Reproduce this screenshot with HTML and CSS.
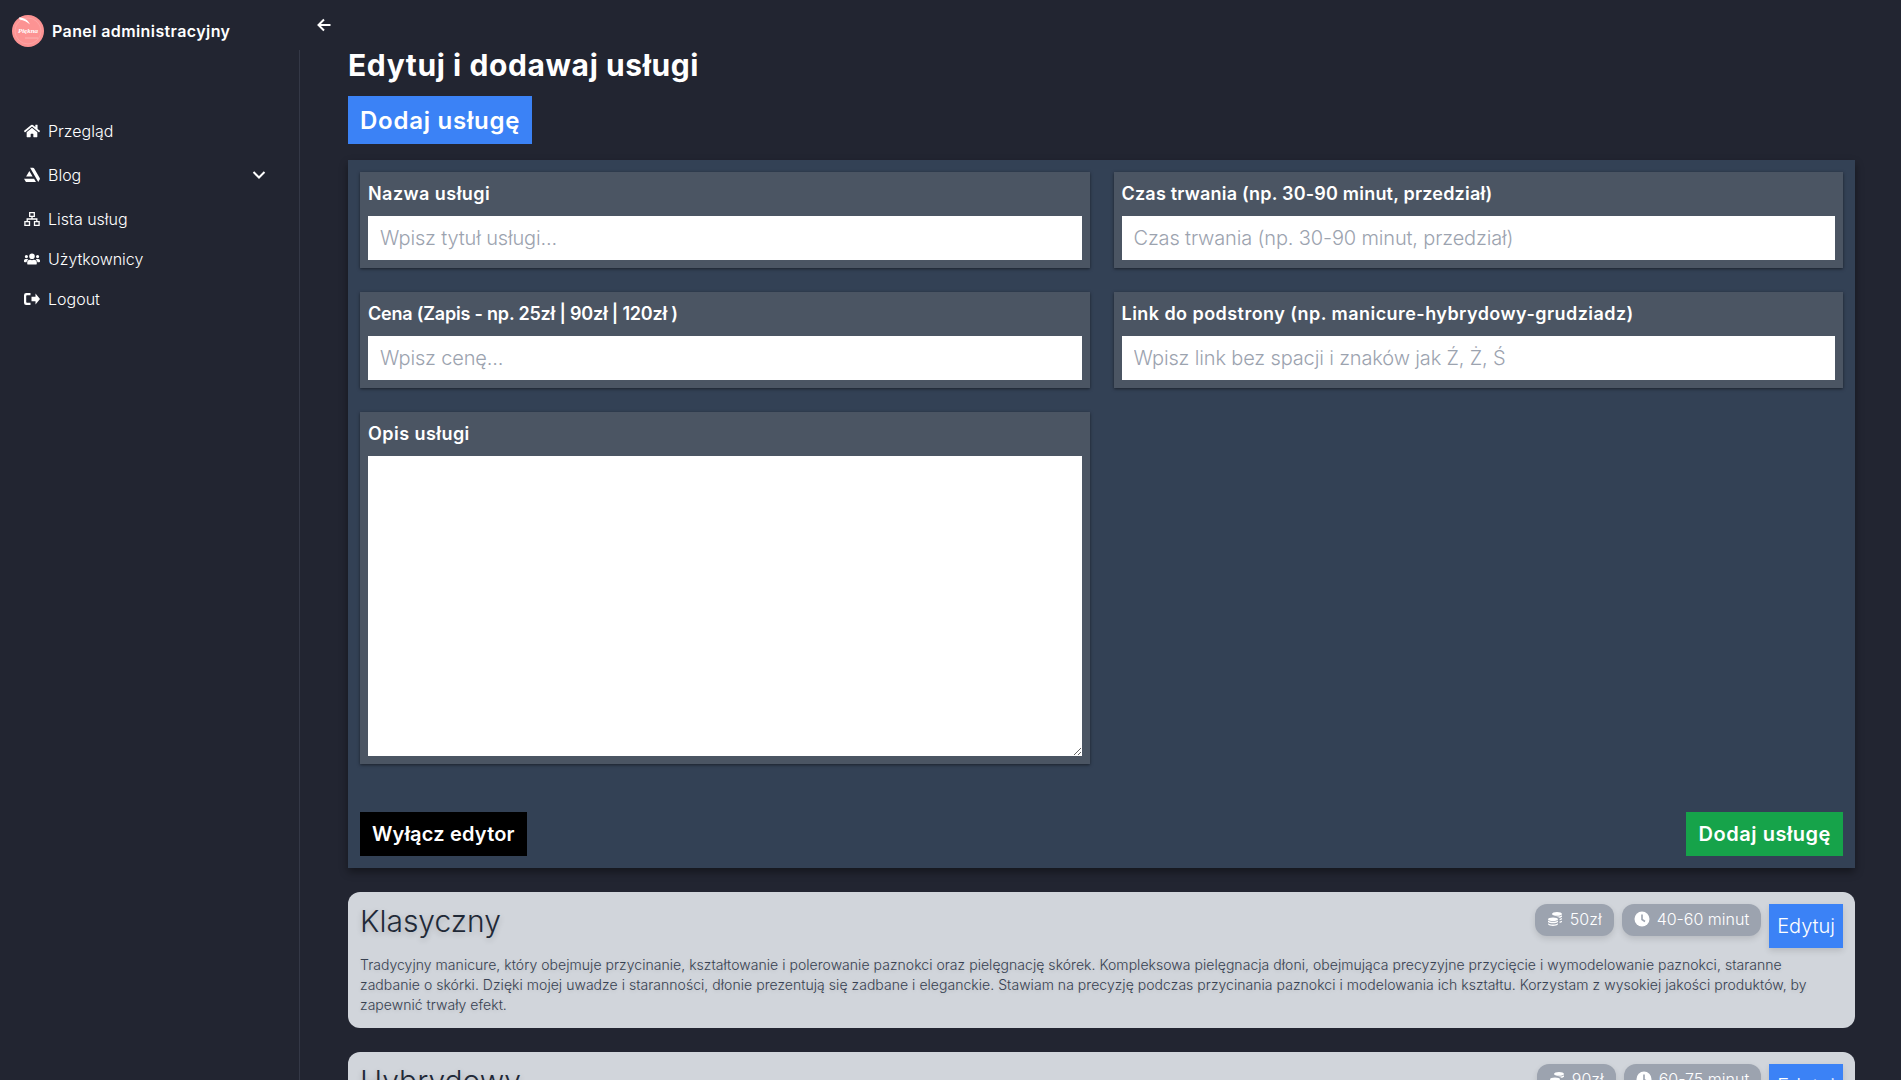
FILE: index.html
```html
<!DOCTYPE html>
<html lang="pl">
<head>
    <title>Panel administracyjny</title>
    <meta charset="UTF-8">
    <link rel="stylesheet" href="styles.css">
</head>
<body>
    <aside class="sidebar">
        <div class="brand">
            <div class="brand-name">
                <svg class="logo" viewBox="0 0 32 32">
                    <circle cx="16" cy="16" r="16" fill="#fc9393"/>
                    <circle cx="16" cy="16" r="13" fill="none" stroke="#fdb4b4" stroke-width=".5"/>
                    <path d="M7 2.500C12 2.500 15.500 4.500 18 9.500C15 6.800 12 5.500 7.500 4.500Z" fill="#fff"/>
                    <text class="logo-text" x="16" y="18" text-anchor="middle">Piękna</text>
                    <path d="M13 23H26" stroke="#fdc4c4" stroke-width=".7"/>
                </svg>
                <span>Panel administracyjny</span>
            </div>
            <button class="collapse">
                <svg viewBox="0 0 16 16" width="16" height="16"><path d="M14.500 8H2.500M8 2.500L2.500 8L8 13.500" fill="none" stroke="#fff" stroke-width="2"/></svg>
            </button>
        </div>
        <nav class="menu">
            <a class="menu-item tall" href="#">
                <svg class="menu-icon" viewBox="0 0 576 512"><path fill="#fff" d="M280 148L96 300v164a16 16 0 0 0 16 16l112-1a16 16 0 0 0 16-16v-96a16 16 0 0 1 16-16h64a16 16 0 0 1 16 16v96a16 16 0 0 0 16 16l112 1a16 16 0 0 0 16-16V300L296 148a12 12 0 0 0-16 0zM572 251l-84-69V44a12 12 0 0 0-12-12h-56a12 12 0 0 0-12 12v72l-89-74a48 48 0 0 0-61 0L4 251a12 12 0 0 0-2 17l26 31a12 12 0 0 0 17 2L280 107a12 12 0 0 1 16 0l235 194a12 12 0 0 0 17-2l26-31a12 12 0 0 0-2-17z"/></svg>
                <span>Przegląd</span>
            </a>
            <a class="menu-item tall" href="#">
                <svg class="menu-icon" viewBox="0 0 512 512"><path fill="#fff" d="M2 378l44 76c9 17 27 28 46 28h291l-60-104H2zM510 379c0-10-3-20-8-29L331 53c-9-17-27-28-46-28h-90l261 453 41-71c8-13 13-18 13-28zM275 306L171 126 67 306h208z"/></svg>
                <span>Blog</span>
                <svg class="chevron" viewBox="0 0 16 16" width="16" height="16"><path d="M2.500 5L8 10.500L13.500 5" fill="none" stroke="#fff" stroke-width="2"/></svg>
            </a>
            <a class="menu-item" href="#">
                <svg class="menu-icon" viewBox="0 0 16 16"><path fill="none" stroke="#fff" stroke-width="1.300" d="M5.700 1.700h4.600v3.600H5.700zM.9 10.700h4.600v3.600H.9zM10.500 10.700h4.600v3.600h-4.600zM8 5.300V8M3.200 10.700V8h9.600v2.700"/></svg>
                <span>Lista usług</span>
            </a>
            <a class="menu-item" href="#">
                <svg class="menu-icon" viewBox="0 0 640 512"><path fill="#fff" d="M96 224a64 64 0 1 0 0-128 64 64 0 0 0 0 128zm448 0a64 64 0 1 0 0-128 64 64 0 0 0 0 128zm32 32h-64a64 64 0 0 0-45 19 146 146 0 0 1 75 109h66a32 32 0 0 0 32-32v-32a64 64 0 0 0-64-64zm-256 0a112 112 0 1 0 0-224 112 112 0 0 0 0 224zm77 32h-8a157 157 0 0 1-138 0h-8A115 115 0 0 0 128 403v29a48 48 0 0 0 48 48h288a48 48 0 0 0 48-48v-29a115 115 0 0 0-115-115zm-224-13a64 64 0 0 0-45-19H64a64 64 0 0 0-64 64v32a32 32 0 0 0 32 32h66a147 147 0 0 1 75-109z"/></svg>
                <span>Użytkownicy</span>
            </a>
            <a class="menu-item" href="#">
                <svg class="menu-icon" viewBox="0 0 16 16"><path fill="#fff" d="M7.500 5.800h4V2.400L16 8l-4.500 5.600v-3.400h-4zM2.200 2H6.500v2.200H3a.8.8 0 0 0-.8.8v6c0 .4.400.8.8.8h3.500V14H2.200A2.200 2.200 0 0 1 0 11.800V4.200A2.200 2.200 0 0 1 2.200 2z"/></svg>
                <span>Logout</span>
            </a>
        </nav>
    </aside>

    <main class="content">
        <h1>Edytuj i dodawaj usługi</h1>
        <button class="btn btn-add">Dodaj usługę</button>

        <form class="editor">
            <div class="editor-grid">
                <label class="field">
                    <span>Nazwa usługi</span>
                    <input type="text" placeholder="Wpisz tytuł usługi...">
                </label>
                <label class="field">
                    <span class="narrow">Czas trwania (np. 30-90 minut, przedział)</span>
                    <input type="text" placeholder="Czas trwania (np. 30-90 minut, przedział)">
                </label>
                <label class="field">
                    <span class="tight">Cena (Zapis - np. 25zł | 90zł | 120zł )</span>
                    <input type="text" placeholder="Wpisz cenę...">
                </label>
                <label class="field">
                    <span>Link do podstrony (np. manicure-hybrydowy-grudziadz)</span>
                    <input type="text" placeholder="Wpisz link bez spacji i znaków jak Ź, Ż, Ś">
                </label>
                <label class="field">
                    <span>Opis usługi</span>
                    <textarea></textarea>
                </label>
            </div>
            <div class="editor-actions">
                <button type="button" class="btn btn-black">Wyłącz edytor</button>
                <button type="button" class="btn btn-green">Dodaj usługę</button>
            </div>
        </form>

        <article class="card">
            <div class="card-top">
                <h2>Klasyczny</h2>
                <div class="badges">
                    <span class="badge">
                        <svg viewBox="0 0 16 16" width="16" height="16"><path fill="#fff" d="M10 1c2.700 0 5 .8 5 1.900S12.700 4.800 10 4.800 5 4 5 2.900 7.300 1 10 1zM15 4.300v1.400c-.5.500-1.500.9-2.800 1.100-.7-.6-1.900-1-3.300-1.200h1.100c2.200 0 4.100-.5 5-1.300zM6 6.400c2.800 0 5 .8 5 1.800S8.800 10 6 10 1 9.200 1 8.200s2.200-1.800 5-1.800zM15 7v1.300c-.5.500-1.300.8-2.400 1V7.900c1-.2 1.900-.5 2.400-.9zM11 9.500v1.400C10.200 11.800 8.200 12.300 6 12.300S1.800 11.800 1 10.900V9.500c1 .8 2.800 1.300 5 1.300s4-.5 5-1.300zM15 9.700V11c-.5.500-1.300.8-2.400 1v-1.400c1-.2 1.900-.5 2.400-.9zM11 12.200v1.100C10.200 14.400 8.200 15 6 15S1.800 14.400 1 13.300v-1.100c1 .8 2.800 1.300 5 1.300s4-.5 5-1.300z"/></svg>
                        50zł
                    </span>
                    <span class="badge">
                        <svg viewBox="0 0 16 16" width="16" height="16"><circle cx="8" cy="8" r="7.500" fill="#fff"/><path d="M8 3.500V8.500L11 10.500" fill="none" stroke="#9ca3af" stroke-width="1.600"/></svg>
                        40-60 minut
                    </span>
                    <button class="btn btn-edit">Edytuj</button>
                </div>
            </div>
            <p>Tradycyjny manicure, który obejmuje przycinanie, kształtowanie i polerowanie paznokci oraz pielęgnację skórek. Kompleksowa pielęgnacja dłoni, obejmująca precyzyjne przycięcie i wymodelowanie paznokci, staranne zadbanie o skórki. Dzięki mojej uwadze i staranności, dłonie prezentują się zadbane i eleganckie. Stawiam na precyzję podczas przycinania paznokci i modelowania ich kształtu. Korzystam z wysokiej jakości produktów, by zapewnić trwały efekt.</p>
        </article>

        <article class="card">
            <div class="card-top">
                <h2>Hybrydowy</h2>
                <div class="badges">
                    <span class="badge">
                        <svg viewBox="0 0 16 16" width="16" height="16"><path fill="#fff" d="M10 1c2.700 0 5 .8 5 1.900S12.700 4.800 10 4.800 5 4 5 2.900 7.300 1 10 1zM15 4.300v1.400c-.5.500-1.500.9-2.800 1.100-.7-.6-1.900-1-3.300-1.200h1.100c2.200 0 4.100-.5 5-1.300zM6 6.400c2.800 0 5 .8 5 1.800S8.800 10 6 10 1 9.200 1 8.200s2.200-1.800 5-1.800z"/></svg>
                        90zł
                    </span>
                    <span class="badge">
                        <svg viewBox="0 0 16 16" width="16" height="16"><circle cx="8" cy="8" r="7.500" fill="#fff"/><path d="M8 3.500V8.500L11 10.500" fill="none" stroke="#9ca3af" stroke-width="1.600"/></svg>
                        60-75 minut
                    </span>
                    <button class="btn btn-edit">Edytuj</button>
                </div>
            </div>
        </article>
    </main>
</body>
</html>
```

FILE: styles.css
```css
* {
    box-sizing: border-box;
}

html, body {
    height: 1080px;
    overflow: hidden;
}

body {
    margin: 0;
    display: flex;
    background: #222531;
    color: #fff;
    font-family: Inter, 'Liberation Sans', sans-serif;
}

button, input, textarea {
    font-family: inherit;
}

/* sidebar */
.sidebar {
    width: 348px;
    flex-shrink: 0;
}

.brand {
    height: 50px;
    display: flex;
    justify-content: space-between;
    padding: 16px 16px 0 12px;
}

.brand-name {
    display: flex;
    align-items: center;
    gap: 8px;
    height: 30px;
    font-size: 16px;
    font-weight: 600;
    letter-spacing: .4px;
}

.logo {
    width: 32px;
    height: 32px;
    flex-shrink: 0;
}

.logo-text {
    fill: #fff;
    font-family: 'Liberation Serif', serif;
    font-size: 7px;
    font-style: italic;
    letter-spacing: 0;
}

.collapse {
    background: none;
    border: 0;
    padding: 1px 0 0;
    height: 18px;
    display: flex;
}

.menu {
    width: 300px;
    height: 1030px;
    border-right: 1px solid #343846;
    padding: 59px 24px 0;
}

.menu-item {
    height: 40px;
    display: flex;
    align-items: center;
    gap: 8px;
    color: #fff;
    text-decoration: none;
    font-size: 16px;
    font-weight: 300;
}

.menu-item.tall {
    height: 44px;
}

.tall + .tall {
    margin-bottom: 2px;
}

.menu-icon {
    width: 16px;
    height: 16px;
}

.chevron {
    margin-left: auto;
    margin-right: 8px;
}

/* main column */
.content {
    flex: 1;
    padding: 46px 46px 0 0;
    min-width: 0;
}

h1 {
    margin: 0 0 12px;
    font-size: 30px;
    line-height: 38px;
    font-weight: 700;
    letter-spacing: .6px;
}

.btn {
    border: 0;
    color: #fff;
    font-weight: 600;
    padding: 0 12px;
}

.btn-add {
    display: block;
    height: 48px;
    background: #3b82f6;
    font-size: 24px;
    letter-spacing: .75px;
}

.editor {
    margin-top: 16px;
    padding: 12px;
    background: #334155;
    box-shadow: 0 4px 8px rgba(0, 0, 0, .4);
}

.editor-grid {
    display: grid;
    grid-template-columns: 1fr 1fr;
    gap: 24px;
}

.field {
    display: block;
    padding: 8px;
    background: #4b5563;
    box-shadow: 0 1px 3px rgba(0, 0, 0, .5);
}

.field span {
    display: block;
    height: 28px;
    margin-bottom: 8px;
    font-size: 18px;
    line-height: 27px;
    font-weight: 600;
    letter-spacing: .45px;
}

.field span.narrow {
    letter-spacing: .2px;
}

.field span.tight {
    letter-spacing: -.2px;
}

.field input, .field textarea {
    display: block;
    width: 100%;
    border: 0;
    border-radius: 0;
    padding: 0 12px;
    background: #fff;
    font-size: 20px;
    font-weight: 300;
    outline: none;
}

.field input {
    height: 44px;
    letter-spacing: -.15px;
}

.field textarea {
    height: 300px;
    resize: vertical;
}

.field input::placeholder {
    color: #9ca3af;
}

.editor-actions {
    display: flex;
    justify-content: space-between;
    margin-top: 48px;
}

.btn-black, .btn-green {
    height: 44px;
    font-size: 20px;
}

.btn-black {
    background: #000;
    letter-spacing: .2px;
}

.btn-green {
    background: #16a34a;
    letter-spacing: .55px;
}

/* service cards */
.card {
    margin-top: 24px;
    padding: 12px;
    background: #d1d5db;
    border-radius: 12px;
    color: #374151;
}

.card-top {
    display: flex;
    justify-content: space-between;
}

h2 {
    margin: 0;
    font-size: 30px;
    line-height: 34px;
    font-weight: 300;
    color: #1f2937;
    text-shadow: 0 2px 6px rgba(0, 0, 0, .2);
}

.badges {
    display: flex;
    align-items: flex-start;
    gap: 8px;
}

.badge {
    height: 32px;
    display: flex;
    align-items: center;
    gap: 7px;
    padding: 0 12px 2px;
    border-radius: 12px;
    background: #9ca3af;
    color: #fff;
    font-size: 16px;
    font-weight: 300;
    box-shadow: 0 3px 6px rgba(0, 0, 0, .12);
}

.btn-edit {
    height: 44px;
    padding: 0 8px;
    background: #3b82f6;
    font-size: 20px;
    font-weight: 300;
    box-shadow: 0 3px 6px rgba(0, 0, 0, .12);
}

.card p {
    margin: 7px 0 1px;
    font-size: 14px;
    line-height: 20px;
    font-weight: 300;
    letter-spacing: .04px;
    text-shadow: 0 1px 4px rgba(0, 0, 0, .12);
}
```
